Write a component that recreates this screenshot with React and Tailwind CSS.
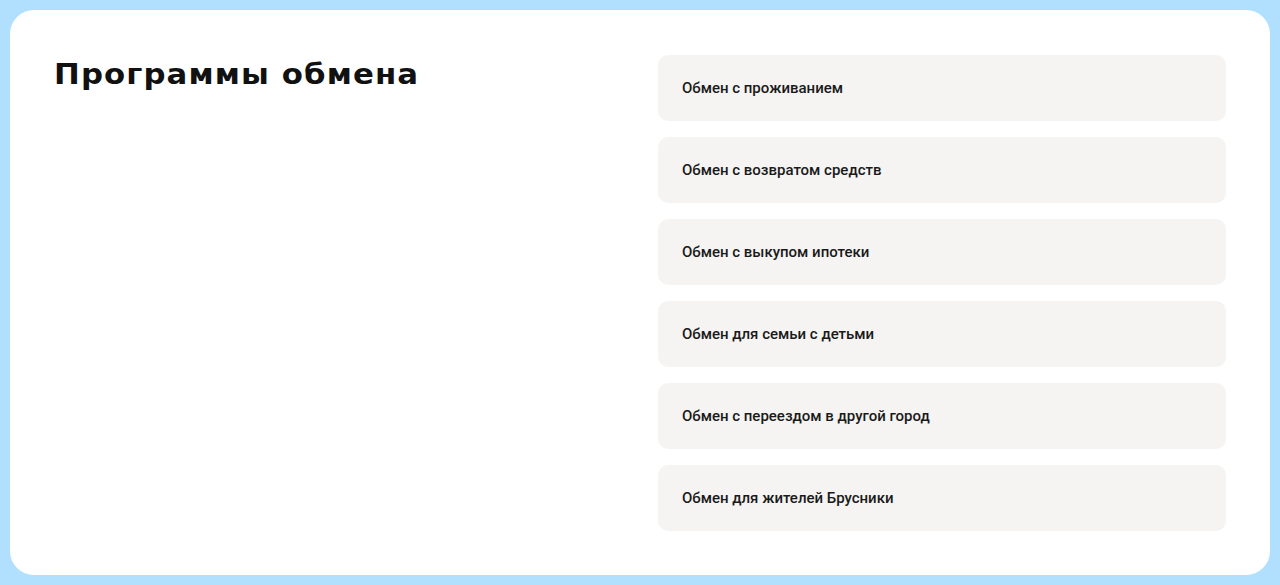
const programs = [
  'Обмен с проживанием',
  'Обмен с возвратом средств',
  'Обмен с выкупом ипотеки',
  'Обмен для семьи с детьми',
  'Обмен с переездом в другой город',
  'Обмен для жителей Брусники',
]

export default function App() {
  return (
    <div className="min-h-[585px] bg-[#b0e0fd] p-[10px]">
      <div className="bg-white rounded-[24px] p-[44px] grid grid-cols-[1fr_568px] gap-[36px] min-h-[565px]">
        <div>
          <h1
            className="pt-[3px] text-[28px] leading-[36px] font-bold text-[#111] tracking-[1px] origin-left scale-x-[1.1] whitespace-nowrap"
            style={{ fontFamily: '"DejaVu Sans", sans-serif' }}
          >
            Программы обмена
          </h1>
        </div>
        <div className="flex flex-col gap-4 pt-[1px]">
          {programs.map((p) => (
            <div
              key={p}
              className="h-[66px] rounded-[10px] bg-[#f5f4f2] px-6 flex items-center text-[15px] font-medium text-[#1a1a1a]"
              style={{ fontFamily: 'Roboto, sans-serif' }}
            >
              {p}
            </div>
          ))}
        </div>
      </div>
    </div>
  )
}
